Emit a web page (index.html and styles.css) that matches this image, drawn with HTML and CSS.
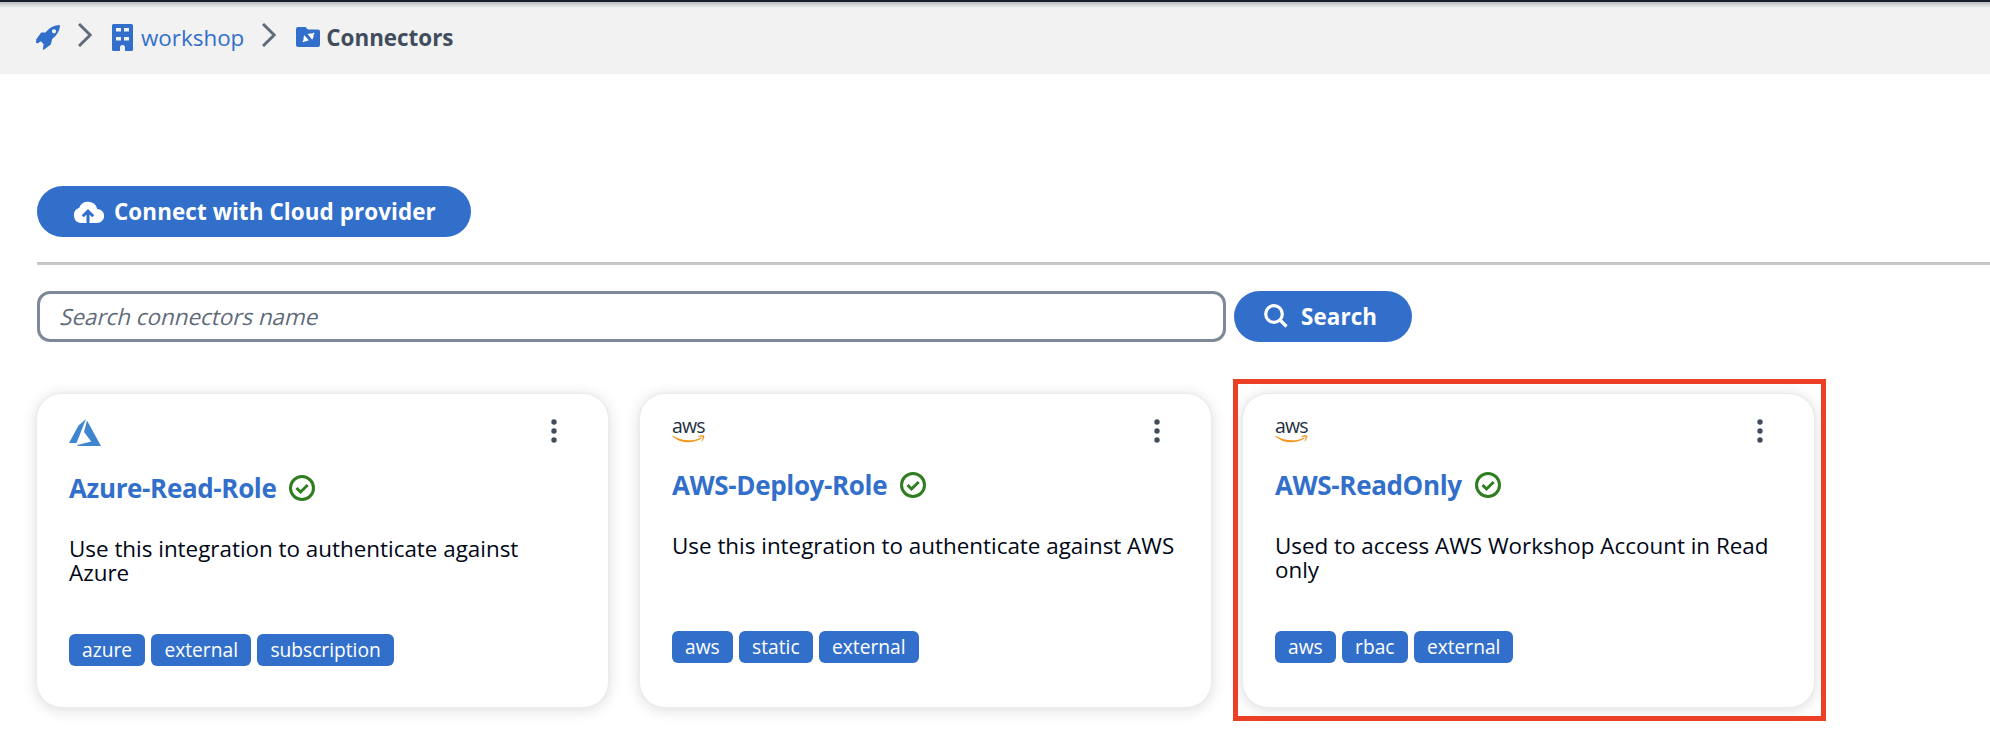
FILE: index.html
```html
<!DOCTYPE html>
<html lang="en">
<head>
<meta charset="utf-8">
<title>Connectors</title>
<link rel="stylesheet" href="styles.css">
</head>
<body>
<header class="topbar">
  <nav class="crumbs">
    <svg class="rocket" viewBox="0 0 24 25"><path fill-rule="evenodd" d="M24 0C18 .3 13.400 2.600 9.600 7.600H5.200L0 14.800 .8 17l4.200-.6L7.600 19 6.800 24.400l1 .4 7-5.200 1.400-5.600C21.200 10 23.800 5.500 24 0ZM18 4.200a2.100 2.100 0 1 1 0 4.200 2.100 2.100 0 0 1 0-4.200Z"/><path d="M4.500 15.500 0 16.200V18l2.400.2Z"/></svg>
    <svg class="chevron" viewBox="0 0 14 24"><path d="M1 1 12.200 12 1 23"/></svg>
    <a class="crumb-link" href="#"><svg class="building" viewBox="0 0 21 27"><path fill-rule="evenodd" d="M1.500 0h18A1.500 1.500 0 0 1 21 1.500v24a1.500 1.500 0 0 1-1.500 1.500H13v-3.500a2.500 2.500 0 0 0-5 0V27H1.500A1.500 1.500 0 0 1 0 25.500v-24A1.500 1.500 0 0 1 1.500 0ZM4 4v3.500h5V4ZM12 4v3.500h5V4ZM4 13v3.500h5V13ZM12 13v3.500h5V13Z"/></svg>workshop</a>
    <svg class="chevron" viewBox="0 0 14 24"><path d="M1 1 12.200 12 1 23"/></svg>
    <span class="crumb-current"><svg class="folder" viewBox="0 0 24 20"><path d="M2 0h7.500l2.500 2.500h10a2 2 0 0 1 2 2V18a2 2 0 0 1-2 2H2a2 2 0 0 1-2-2V2a2 2 0 0 1 2-2Z"/><path class="plug" d="m8.400 8.300 4.300 4.900-1.500.9-2.600.3-1.300.9-.8-.8 1-1.400.1-2.900ZM11.600 7.100l2.600-.7 2.300.1 1.200-1 .8.800-.9 1.400-.2 2.600-1.200 2.400Z"/></svg>Connectors</span>
  </nav>
</header>
<main class="page">
  <button class="btn connect"><svg class="cloud" viewBox="0 0 32 23"><path d="M8 23a8 8 0 0 1-.8-15.300A9.500 9.500 0 0 1 25.200 9 7 7 0 0 1 25 23Z"/><path class="arrow" d="M16 23V11.500M10.800 16.200 16 11l5.200 5.200"/></svg>Connect with Cloud provider</button>
  <hr class="rule">
  <form class="search">
    <input class="search-input" type="text" placeholder="Search connectors name">
    <button class="btn search-btn" type="button"><svg class="lens" viewBox="0 0 24 24"><circle cx="10" cy="10" r="8.300"/><path d="m16 16 6.500 6.500"/></svg>Search</button>
  </form>
  <section class="cards">
    <article class="card">
      <div class="card-top"><svg class="azure" viewBox="0 0 32 27"><path d="M17 0 9.500 6.500 0 24h7.500ZM18 1.500 15 13l7.200 9.500L8.500 26V27H32Z"/></svg><svg class="dots" viewBox="0 0 6 24"><circle cx="3" cy="3" r="2.700"/><circle cx="3" cy="12" r="2.700"/><circle cx="3" cy="21" r="2.700"/></svg></div>
      <h2 class="card-title">Azure-Read-Role<svg class="check" viewBox="0 0 26 26"><circle cx="13" cy="13" r="11.500"/><path d="m7.500 13 4 4 7.200-7"/></svg></h2>
      <p class="desc">Use this integration to authenticate against Azure</p>
      <div class="tags"><span class="tag">azure</span><span class="tag">external</span><span class="tag">subscription</span></div>
    </article>
    <article class="card">
      <div class="card-top"><span class="aws"><span class="aws-word">aws</span><svg class="smile" viewBox="0 0 32 8"><path d="M0 .5C8 6 20 7 28.500 2.500l.8.800C21 9 8 9 0 1.500ZM25.500 1.500C28 0 31 0 31.700.800 32.300 2 31 5 29.500 6.500L29 6.300C30 4 30.500 2.500 30 2c-.5-.5-2.500-.3-4.300 0Z"/></svg></span><svg class="dots" viewBox="0 0 6 24"><circle cx="3" cy="3" r="2.700"/><circle cx="3" cy="12" r="2.700"/><circle cx="3" cy="21" r="2.700"/></svg></div>
      <h2 class="card-title">AWS-Deploy-Role<svg class="check" viewBox="0 0 26 26"><circle cx="13" cy="13" r="11.500"/><path d="m7.500 13 4 4 7.200-7"/></svg></h2>
      <p class="desc">Use this integration to authenticate against AWS</p>
      <div class="tags"><span class="tag">aws</span><span class="tag">static</span><span class="tag">external</span></div>
    </article>
    <article class="card highlighted">
      <div class="card-top"><span class="aws"><span class="aws-word">aws</span><svg class="smile" viewBox="0 0 32 8"><path d="M0 .5C8 6 20 7 28.500 2.500l.8.800C21 9 8 9 0 1.500ZM25.500 1.500C28 0 31 0 31.700.800 32.300 2 31 5 29.500 6.500L29 6.300C30 4 30.500 2.500 30 2c-.5-.5-2.500-.3-4.300 0Z"/></svg></span><svg class="dots" viewBox="0 0 6 24"><circle cx="3" cy="3" r="2.700"/><circle cx="3" cy="12" r="2.700"/><circle cx="3" cy="21" r="2.700"/></svg></div>
      <h2 class="card-title">AWS-ReadOnly<svg class="check" viewBox="0 0 26 26"><circle cx="13" cy="13" r="11.500"/><path d="m7.500 13 4 4 7.200-7"/></svg></h2>
      <p class="desc">Used to access AWS Workshop Account in Read only</p>
      <div class="tags"><span class="tag">aws</span><span class="tag">rbac</span><span class="tag">external</span></div>
    </article>
  </section>
</main>
</body>
</html>
```
FILE: styles.css
```css
*, *::after { box-sizing: border-box; }
body { margin: 0; height: 752px; overflow: hidden; background: #fff; color: #000716; font-family: "Open Sans", sans-serif; font-size: 22.4px; }
svg { display: block; flex: none; }
.topbar { height: 74px; background: linear-gradient(#b9bbbe, #f2f2f3 6px); border-top: 2px solid #161d2b; padding-left: 36px; }
.crumbs { display: flex; align-items: center; height: 70px; }
.rocket { width: 24px; height: 25px; fill: #326fcb; }
.chevron { width: 14px; height: 24px; margin: -5px 20px 0 18px; fill: none; stroke: #5f6b7a; stroke-width: 3; }
.crumb-link { display: flex; align-items: center; gap: 8px; color: #326fcb; text-decoration: none; }
.building { width: 21px; height: 27px; fill: #326fcb; }
.crumb-current { display: flex; align-items: center; gap: 6px; color: #414d5c; font-weight: 700; }
.folder { width: 24px; height: 20px; fill: #326fcb; }
.folder .plug { fill: #fff; }
.page { padding: 112px 0 0 37px; }
.btn { display: flex; align-items: center; height: 51px; border: 0; border-radius: 26px; background: #326fcb; color: #fff; font: 700 22.4px "Open Sans", sans-serif; letter-spacing: .1px; white-space: nowrap; padding-bottom: 2px; }
.connect { width: 434px; padding-left: 35px; gap: 10px; }
.cloud { width: 32px; height: 23px; fill: #fff; }
.cloud .arrow { fill: none; stroke: #326fcb; stroke-width: 3; }
.rule { height: 3px; margin: 25px 0 26px; border: 0; background: #c6c6c6; }
.search { display: flex; gap: 8px; }
.search-input { width: 1189px; height: 51px; border: 3px solid #7d8998; border-radius: 13px; padding: 0 20px 1px 21px; font: 22.4px "Open Sans", sans-serif; }
.search-input::placeholder { color: #5f6b7a; opacity: 1; transform: skewX(-14deg); }
.search-btn { width: 178px; padding-left: 30px; gap: 13px; }
.lens { width: 24px; height: 24px; fill: none; stroke: #fff; stroke-width: 3.200; }
.cards { display: flex; gap: 32px; margin-top: 52px; }
.card { position: relative; flex: none; width: 571px; height: 313px; padding: 25px 32px 0; border-radius: 25px; background: #fff; box-shadow: 0 0 2px 1px #e9ebed, 0 2px 14px 2px rgba(0, 7, 22, .12); }
.highlighted::after { content: ""; position: absolute; left: -10px; top: -15px; width: 593px; height: 342px; border: 5px solid #eb4025; }
.card-top { display: flex; justify-content: space-between; align-items: flex-start; padding-right: 19px; }
.azure { width: 32px; height: 27px; fill: #3e87d0; }
.dots { width: 6px; height: 24px; fill: #414d5c; }
.aws { display: block; width: 33px; height: 24px; }
.aws-word { display: block; height: 16px; font-size: 19.5px; letter-spacing: -.8px; line-height: 14px; color: #232f3e; }
.smile { width: 33px; height: 8px; fill: #f7981f; }
.card-title { display: flex; align-items: center; gap: 13px; height: 34px; margin: 25px 0 0; color: #326fcb; font-size: 26px; font-weight: 700; letter-spacing: -.36px; }
.check { width: 26px; height: 26px; fill: none; stroke: #2f7d20; stroke-width: 3; }
.desc { height: 49px; margin: 32px -4px 0 0; line-height: 24px; }
.tags { display: flex; gap: 6.4px; margin-top: 48px; }
.tag { height: 32px; padding: 0 13px; border-radius: 6px; background: #326fcb; color: #fff; font-size: 19.2px; line-height: 31px; }
```
